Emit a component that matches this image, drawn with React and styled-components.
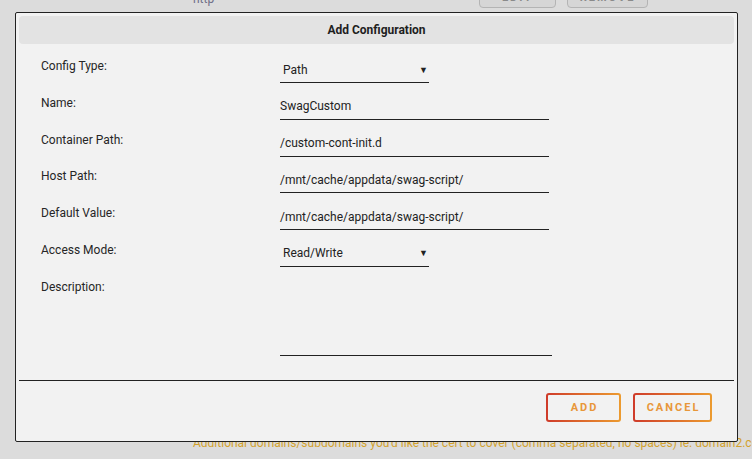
import React from "react";
import styled, { createGlobalStyle } from "styled-components";

const Global = createGlobalStyle`
  html, body { margin: 0; padding: 0; }
  body {
    background: #dcdcdc;
    font-family: Roboto, "Noto Sans", "Liberation Sans", sans-serif;
    color: #262626;
  }
  * { box-sizing: border-box; }
`;

const Page = styled.div`
  position: relative;
  width: 752px;
  height: 459px;
  overflow: hidden;
  background: #dcdcdc;
`;

const BgRow = styled.div`
  display: flex;
  align-items: center;
  height: 22px;
  margin-top: -14px;
`;

const BgText = styled.span`
  margin-left: 193px;
  width: 286px;
  font-size: 12px;
  line-height: 14px;
  margin-top: 4px;
  color: #6f6f88;
`;

const BgButton = styled.div`
  width: ${(p) => p.w}px;
  height: 22px;
  margin-right: 11px;
  border: 1px solid #b4b4b4;
  border-radius: 4px;
  background: #d6d6d6;
  color: #8a8a8a;
  font-size: 11px;
  font-weight: 700;
  letter-spacing: 2px;
  display: flex;
  align-items: center;
  justify-content: center;
`;

const Hint = styled.div`
  position: absolute;
  left: 193px;
  top: 435px;
  white-space: nowrap;
  font-size: 12px;
  line-height: 16px;
  color: #d3a22e;
`;

const Dialog = styled.div`
  position: absolute;
  left: 15px;
  top: 12px;
  width: 723px;
  height: 430px;
  background: #f2f2f2;
  border: 1px solid #222;
  border-radius: 2px;
  padding: 3px 3px 0 3px;
  display: flex;
  flex-direction: column;
`;

const TitleBar = styled.div`
  height: 28px;
  border-radius: 4px;
  background: #e3e3e3;
  display: flex;
  align-items: center;
  justify-content: center;
  font-size: 12px;
  font-weight: 700;
  color: #1e1e1e;
`;

const Form = styled.div`
  display: flex;
  flex-direction: column;
  gap: 10.8px;
  padding: 13px 0 0 22px;
`;

const Row = styled.div`
  display: grid;
  grid-template-columns: 239px 1fr;
  align-items: start;
`;

const Label = styled.div`
  font-size: 12px;
  line-height: 18px;
  color: #262626;
`;

const Field = styled.div`
  width: ${(p) => p.w}px;
  height: ${(p) => p.h || 26}px;
  border-bottom: 1px solid #222;
  font-size: 12px;
  line-height: 26px;
  color: #222;
  padding-left: ${(p) => (p.select ? 3 : 0)}px;
  display: flex;
  justify-content: space-between;
  align-items: center;
`;

const Arrow = styled.span`
  font-size: 9px;
  margin-right: 1px;
  color: #222;
`;

const Separator = styled.div`
  margin-top: 24px;
  height: 1px;
  background: #222;
`;

const Actions = styled.div`
  display: flex;
  justify-content: flex-end;
  gap: 12px;
  padding: 12px 22px 0 0;
`;

const Button = styled.button`
  width: ${(p) => p.w}px;
  height: 29px;
  border: 2px solid transparent;
  border-radius: 3px;
  background: linear-gradient(#f2f2f2, #f2f2f2) padding-box,
    linear-gradient(90deg, #cf3b2a, #ec9b2f) border-box;
  font-family: Roboto, "Noto Sans", sans-serif;
  font-size: 11px;
  font-weight: 700;
  letter-spacing: 2px;
  color: #e8973a;
  padding: 0 0 0 2px;
  cursor: pointer;
`;

const rows = [
  { label: "Config Type:", value: "Path", select: true, w: 149 },
  { label: "Name:", value: "SwagCustom", w: 269 },
  { label: "Container Path:", value: "/custom-cont-init.d", w: 269 },
  { label: "Host Path:", value: "/mnt/cache/appdata/swag-script/", w: 269 },
  { label: "Default Value:", value: "/mnt/cache/appdata/swag-script/", w: 269 },
  { label: "Access Mode:", value: "Read/Write", select: true, w: 149 },
];

export default function App() {
  return (
    <Page>
      <Global />
      <BgRow>
        <BgText>http</BgText>
        <BgButton w={77}>EDIT</BgButton>
        <BgButton w={81}>REMOVE</BgButton>
      </BgRow>
      <Hint>
        Additional domains/subdomains you'd like the cert to cover (comma separated, no spaces) ie. domain2.com
      </Hint>
      <Dialog>
        <TitleBar>Add Configuration</TitleBar>
        <Form>
          {rows.map((r) => (
            <Row key={r.label}>
              <Label>{r.label}</Label>
              <Field w={r.w} select={r.select}>
                <span>{r.value}</span>
                {r.select && <Arrow>▼</Arrow>}
              </Field>
            </Row>
          ))}
          <Row>
            <Label>Description:</Label>
            <Field w={272} h={78} />
          </Row>
        </Form>
        <Separator />
        <Actions>
          <Button w={75}>ADD</Button>
          <Button w={79}>CANCEL</Button>
        </Actions>
      </Dialog>
    </Page>
  );
}
